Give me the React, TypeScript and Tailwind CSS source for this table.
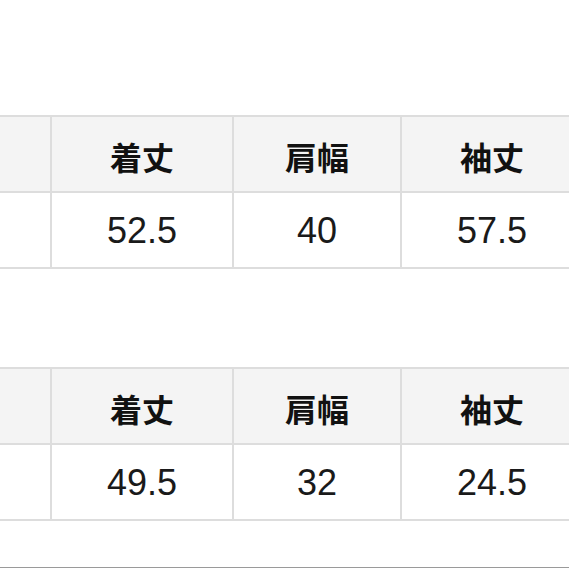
const headers = ["着丈", "肩幅", "袖丈"]

const tables: string[][] = [
  ["52.5", "40", "57.5"],
  ["49.5", "32", "24.5"],
]

function SizeTable({ values }: { values: string[] }) {
  return (
    <div className="grid w-[584px] grid-cols-[50px_180px_166px_180px] gap-[2px] bg-[#dddddd] py-[2px]">
      <div className="h-[74px] bg-[#f4f4f4]" />
      {headers.map((h) => (
        <div
          key={h}
          className="flex h-[74px] items-center justify-center bg-[#f4f4f4] pt-[3px] text-[32px] font-bold text-[#111] [font-family:'Noto_Sans_CJK_JP',sans-serif]"
        >
          {h}
        </div>
      ))}
      <div className="h-[74px] bg-white" />
      {values.map((v, i) => (
        <div
          key={i}
          className="flex h-[74px] items-center justify-center bg-white pt-[2px] text-[36px] text-[#1a1a1a] [font-family:'Liberation_Sans',Arial,sans-serif]"
        >
          {v}
        </div>
      ))}
    </div>
  )
}

export default function App() {
  return (
    <div className="h-[569px] w-[569px] overflow-hidden bg-white">
      <div className="h-[115px]" />
      <SizeTable values={tables[0]} />
      <div className="h-[98px]" />
      <SizeTable values={tables[1]} />
      <div className="h-[46px]" />
      <div className="h-px bg-[#9a9a9a]" />
    </div>
  )
}
